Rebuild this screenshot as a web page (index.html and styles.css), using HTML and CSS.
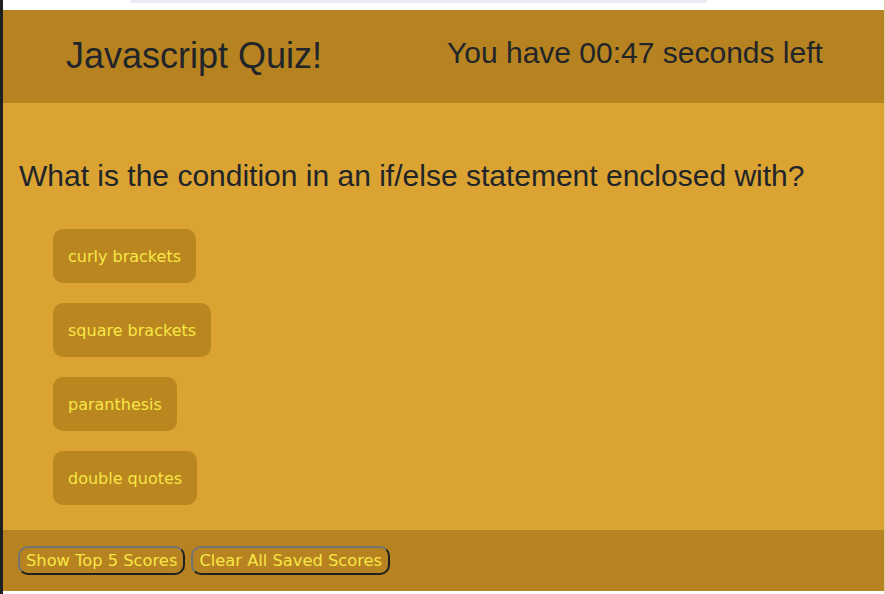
FILE: index.html
```html
<!DOCTYPE html>
<html lang="en">
<head>
<meta charset="utf-8">
<title>Javascript Quiz!</title>
<link rel="stylesheet" href="styles.css">
</head>
<body>
<div class="edge"></div>
<div class="page">
  <div class="topbar"><div class="pill"></div></div>
  <header class="header">
    <h1 class="title">Javascript Quiz!</h1>
    <p class="timer">You have 00:47 seconds left</p>
  </header>
  <main class="main">
    <h2 class="question">What is the condition in an if/else statement enclosed with?</h2>
    <div class="answers">
      <button class="answer">curly brackets</button>
      <button class="answer">square brackets</button>
      <button class="answer">paranthesis</button>
      <button class="answer">double quotes</button>
    </div>
  </main>
  <footer class="footer">
    <button class="score-btn">Show Top 5 Scores</button>
    <button class="score-btn">Clear All Saved Scores</button>
  </footer>
  <div class="bottombar"></div>
</div>
</body>
</html>
```

FILE: styles.css
```css
html, body {
  margin: 0;
  padding: 0;
}
body {
  display: flex;
  height: 594px;
  overflow: hidden;
  background: #ffffff;
  font-family: "Liberation Sans", Arial, sans-serif;
  color: #212529;
}
.edge {
  width: 3px;
  flex: none;
  background: #1e1f21;
}
.page {
  flex: 1;
  display: flex;
  flex-direction: column;
  border-right: 1px solid #d9c9a0;
}
.topbar {
  height: 10px;
  flex: none;
  background: #ffffff;
  padding-left: 127px;
  box-sizing: border-box;
}
.pill {
  width: 577px;
  height: 3px;
  background: #e9ebf6;
  border-radius: 0 0 10px 10px;
}
.header {
  height: 93px;
  flex: none;
  background: #b78320;
  display: grid;
  grid-template-columns: 381px auto;
  align-items: start;
  padding: 25px 0 0 63px;
  box-sizing: border-box;
}
.title {
  margin: 0;
  font-size: 36px;
  font-weight: 400;
  line-height: 41px;
}
.timer {
  margin: 0;
  font-size: 30px;
  line-height: 35px;
}
.main {
  height: 427px;
  flex: none;
  background: #daa332;
  padding: 55px 0 0 16px;
  box-sizing: border-box;
}
.question {
  margin: 0;
  font-size: 30px;
  font-weight: 400;
  line-height: 35px;
}
.answers {
  display: flex;
  flex-direction: column;
  align-items: flex-start;
  gap: 20px;
  margin: 36px 0 0 34px;
}
.answer {
  height: 54px;
  padding: 0 15px;
  border: none;
  border-radius: 10px;
  background: #b9861f;
  color: #f8e646;
  font-family: "DejaVu Sans", Verdana, sans-serif;
  font-size: 16px;
}
.footer {
  height: 61px;
  flex: none;
  background: #b78320;
  display: flex;
  align-items: flex-start;
  gap: 6px;
  padding: 16px 0 0 15px;
  box-sizing: border-box;
}
.score-btn {
  height: 29px;
  padding: 0 6px;
  background: transparent;
  border: 2px solid;
  border-color: #747474 #1f1f1f #1f1f1f #747474;
  border-radius: 10px;
  color: #f8e646;
  font-family: "DejaVu Sans", Verdana, sans-serif;
  font-size: 16.3px;
}
.bottombar {
  flex: 1;
  background: #ffffff;
}
```
